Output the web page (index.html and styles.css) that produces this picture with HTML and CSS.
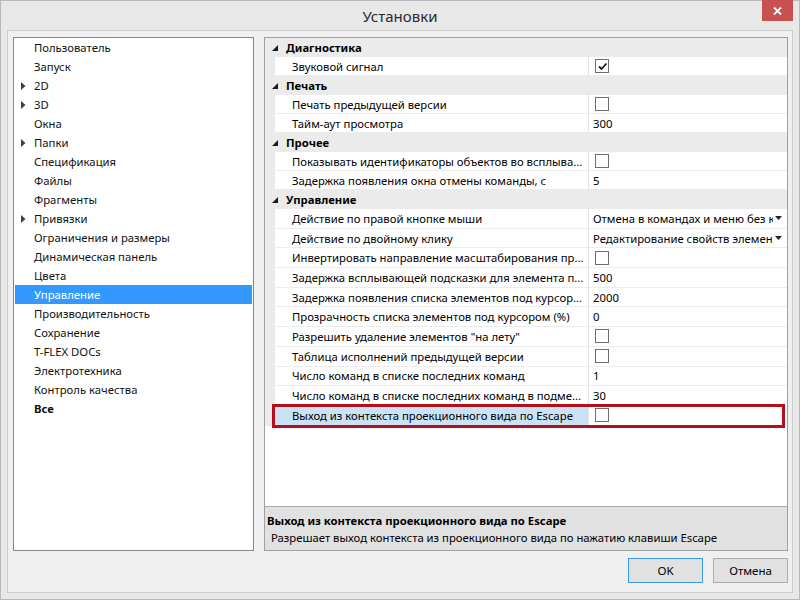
FILE: index.html
```html
<!DOCTYPE html>
<html lang="ru">
<head>
<meta charset="utf-8">
<title>Установки</title>
<link rel="stylesheet" href="styles.css">
</head>
<body>
<div class="window">
  <div class="titlebar">
    <span></span>
    <div class="title">Установки</div>
    <div class="close"><svg width="9" height="8" viewBox="0 0 9 8"><path d="M1 0.5 L8 7.5 M8 0.5 L1 7.5" stroke="#fff" stroke-width="1.8"/></svg></div>
  </div>
  <div class="client">
    <div class="panels">
      <div class="tree">
        <div class="ti"><span class="exp"></span>Пользователь</div>
        <div class="ti"><span class="exp"></span>Запуск</div>
        <div class="ti"><span class="exp"><svg width="5" height="8" viewBox="0 0 5 8"><path d="M0 0 L4.5 4 L0 8 Z" fill="#404040"/></svg></span>2D</div>
        <div class="ti"><span class="exp"><svg width="5" height="8" viewBox="0 0 5 8"><path d="M0 0 L4.5 4 L0 8 Z" fill="#404040"/></svg></span>3D</div>
        <div class="ti"><span class="exp"></span>Окна</div>
        <div class="ti"><span class="exp"><svg width="5" height="8" viewBox="0 0 5 8"><path d="M0 0 L4.5 4 L0 8 Z" fill="#404040"/></svg></span>Папки</div>
        <div class="ti"><span class="exp"></span>Спецификация</div>
        <div class="ti"><span class="exp"></span>Файлы</div>
        <div class="ti"><span class="exp"></span>Фрагменты</div>
        <div class="ti"><span class="exp"><svg width="5" height="8" viewBox="0 0 5 8"><path d="M0 0 L4.5 4 L0 8 Z" fill="#404040"/></svg></span>Привязки</div>
        <div class="ti"><span class="exp"></span>Ограничения и размеры</div>
        <div class="ti"><span class="exp"></span>Динамическая панель</div>
        <div class="ti"><span class="exp"></span>Цвета</div>
        <div class="ti sel"><span class="exp"></span>Управление</div>
        <div class="ti"><span class="exp"></span>Производительность</div>
        <div class="ti"><span class="exp"></span>Сохранение</div>
        <div class="ti"><span class="exp"></span>T-FLEX DOCs</div>
        <div class="ti"><span class="exp"></span>Электротехника</div>
        <div class="ti"><span class="exp"></span>Контроль качества</div>
        <div class="ti bold"><span class="exp"></span>Все</div>
      </div>
      <div class="props">
        <div class="grid">
          <div class="cat"><span class="tri"><svg width="6" height="6" viewBox="0 0 6 6"><path d="M6 0 L6 6 L0 6 Z" fill="#1a1a1a"/></svg></span><span class="cname">Диагностика</span></div>
          <div class="row"><span class="gut"></span><span class="name">Звуковой сигнал</span><span class="val"><span class="cb"><svg width="11" height="11" viewBox="0 0 11 11"><path d="M2 5.5 L4.5 8 L9.5 2.5" stroke="#1a1a1a" stroke-width="1.8" fill="none"/></svg></span></span></div>
          <div class="cat"><span class="tri"><svg width="6" height="6" viewBox="0 0 6 6"><path d="M6 0 L6 6 L0 6 Z" fill="#1a1a1a"/></svg></span><span class="cname">Печать</span></div>
          <div class="row"><span class="gut"></span><span class="name">Печать предыдущей версии</span><span class="val"><span class="cb"></span></span></div>
          <div class="row"><span class="gut"></span><span class="name">Тайм-аут просмотра</span><span class="val"><span class="vt">300</span></span></div>
          <div class="cat"><span class="tri"><svg width="6" height="6" viewBox="0 0 6 6"><path d="M6 0 L6 6 L0 6 Z" fill="#1a1a1a"/></svg></span><span class="cname">Прочее</span></div>
          <div class="row"><span class="gut"></span><span class="name">Показывать идентификаторы объектов во всплыва...</span><span class="val"><span class="cb"></span></span></div>
          <div class="row"><span class="gut"></span><span class="name">Задержка появления окна отмены команды, с</span><span class="val"><span class="vt">5</span></span></div>
          <div class="cat"><span class="tri"><svg width="6" height="6" viewBox="0 0 6 6"><path d="M6 0 L6 6 L0 6 Z" fill="#1a1a1a"/></svg></span><span class="cname">Управление</span></div>
          <div class="row tall"><span class="gut"></span><span class="name">Действие по правой кнопке мыши</span><span class="val"><span class="vt">Отмена в командах и меню без к</span><svg class="dd" width="7" height="4" viewBox="0 0 7 4"><path d="M0 0 L7 0 L3.5 4 Z" fill="#222"/></svg></span></div>
          <div class="row tall"><span class="gut"></span><span class="name">Действие по двойному клику</span><span class="val"><span class="vt">Редактирование свойств элемен</span><svg class="dd" width="7" height="4" viewBox="0 0 7 4"><path d="M0 0 L7 0 L3.5 4 Z" fill="#222"/></svg></span></div>
          <div class="row tall"><span class="gut"></span><span class="name">Инвертировать направление масштабирования пр...</span><span class="val"><span class="cb"></span></span></div>
          <div class="row tall"><span class="gut"></span><span class="name">Задержка всплывающей подсказки для элемента п...</span><span class="val"><span class="vt">500</span></span></div>
          <div class="row tall"><span class="gut"></span><span class="name">Задержка появления списка элементов под курсор...</span><span class="val"><span class="vt">2000</span></span></div>
          <div class="row tall"><span class="gut"></span><span class="name">Прозрачность списка элементов под курсором (%)</span><span class="val"><span class="vt">0</span></span></div>
          <div class="row tall"><span class="gut"></span><span class="name">Разрешить удаление элементов "на лету"</span><span class="val"><span class="cb"></span></span></div>
          <div class="row tall"><span class="gut"></span><span class="name">Таблица исполнений предыдущей версии</span><span class="val"><span class="cb"></span></span></div>
          <div class="row tall"><span class="gut"></span><span class="name">Число команд в списке последних команд</span><span class="val"><span class="vt">1</span></span></div>
          <div class="row tall"><span class="gut"></span><span class="name">Число команд в списке последних команд в подме...</span><span class="val"><span class="vt">30</span></span></div>
          <div class="row tall hl"><span class="gut"></span><span class="name">Выход из контекста проекционного вида по Escape</span><span class="val"><span class="cb"></span></span><span class="mark"></span></div>
        </div>
        <div class="desc">
          <div class="dtitle">Выход из контекста проекционного вида по Escape</div>
          <div class="dtext">Разрешает выход контекста из проекционного вида по нажатию клавиши Escape</div>
        </div>
      </div>
    </div>
    <div class="buttons">
      <button class="btn ok">OK</button>
      <button class="btn">Отмена</button>
    </div>
  </div>
</div>
</body>
</html>
```
FILE: styles.css
```css
* { box-sizing: border-box; }
html, body { margin: 0; padding: 0; }
body {
  width: 800px;
  height: 600px;
  overflow: hidden;
  font-family: "Noto Sans", "Open Sans", sans-serif;
  font-size: 11.3px;
  color: #000;
  background: #e6e6e6;
}
.window {
  width: 800px;
  height: 600px;
  display: flex;
  flex-direction: column;
  border: 1px solid #b9b9b9;
  background: #e8e8e8;
}
.titlebar {
  height: 29px;
  display: grid;
  grid-template-columns: 1fr auto 1fr;
  align-items: start;
}
.title {
  font-size: 15px;
  color: #2b2b2b;
  line-height: 30px;
}
.close {
  justify-self: end;
  margin-right: 6px;
  margin-top: -1px;
  width: 31px;
  height: 21px;
  background: #c75050;
  display: flex;
  align-items: center;
  justify-content: center;
}
.client {
  flex: 1;
  margin: 0 6px 6px 6px;
  background: #f0f0f0;
  border: 1px solid #cdcdcd;
  padding: 6px 4px 9px 5px;
  display: flex;
  flex-direction: column;
}
.panels {
  height: 514px;
  display: flex;
  gap: 10px;
}
.tree {
  flex: none;
  width: 241px;
  border: 1px solid #828790;
  background: #fff;
  padding: 0 1px;
}
.ti {
  height: 19px;
  line-height: 19px;
  display: flex;
  align-items: center;
  white-space: nowrap;
  color: #111;
}
.ti .exp {
  width: 19px;
  padding-left: 6px;
  display: flex;
  align-items: center;
}
.ti.sel {
  background: #3399ff;
  color: #fff;
}
.ti.bold { font-weight: bold; }
.props {
  flex: 1;
  min-width: 0;
  overflow: hidden;
  border: 1px solid #a0a0a0;
  background: #fff;
  display: flex;
  flex-direction: column;
}
.grid {
  flex: 1;
}
.cat {
  height: 19px;
  background: #ebebeb;
  display: flex;
  align-items: center;
  font-weight: bold;
}
.cat .tri {
  width: 21px;
  padding-left: 7px;
  display: flex;
  align-items: center;
  margin-top: 1px;
}
.row {
  height: 19px;
  display: flex;
  position: relative;
}
.row.tall { height: 19.7px; }
.row .gut {
  flex: none;
  width: 10px;
  background: #ebebeb;
}
.row .name {
  flex: none;
  width: 314px;
  padding-left: 17px;
  border-right: 1px solid #e3e3e3;
  border-bottom: 1px solid #ececec;
  display: flex;
  align-items: center;
  white-space: nowrap;
  overflow: hidden;
}
.row .val {
  flex: 1;
  min-width: 0;
  padding-left: 4px;
  border-bottom: 1px solid #ececec;
  display: flex;
  align-items: center;
  overflow: hidden;
}
.vt {
  flex: 1;
  min-width: 0;
  white-space: nowrap;
  overflow: hidden;
}
.dd {
  margin: 0 5px 0 2px;
  flex: none;
}
.cb {
  flex: none;
  width: 14px;
  height: 14px;
  margin-left: 2px;
  border: 1px solid #6e6e6e;
  background: #fff;
  display: flex;
  align-items: center;
  justify-content: center;
}
.row.hl .name { background: #c9e2f6; }
.mark {
  position: absolute;
  left: 7px;
  right: 2px;
  top: -2px;
  bottom: -2px;
  border: 3px solid #b3101b;
  pointer-events: none;
}
.desc {
  height: 44px;
  background: #e1e1e1;
  border-top: 1px solid #a9a9a9;
  padding: 6px 2px 0 2px;
}
.dtitle {
  font-weight: bold;
  line-height: 16px;
}
.dtext {
  padding-left: 4px;
  line-height: 18px;
}
.buttons {
  margin-top: 7px;
  display: flex;
  justify-content: flex-end;
  gap: 10px;
}
.btn {
  width: 75px;
  height: 25px;
  font-family: "Noto Sans", "Open Sans", sans-serif;
  font-size: 11.5px;
  color: #000;
  background: #e1e1e1;
  border: 1px solid #adadad;
  padding: 0;
}
.btn.ok { border-color: #3c98e8; }
```
